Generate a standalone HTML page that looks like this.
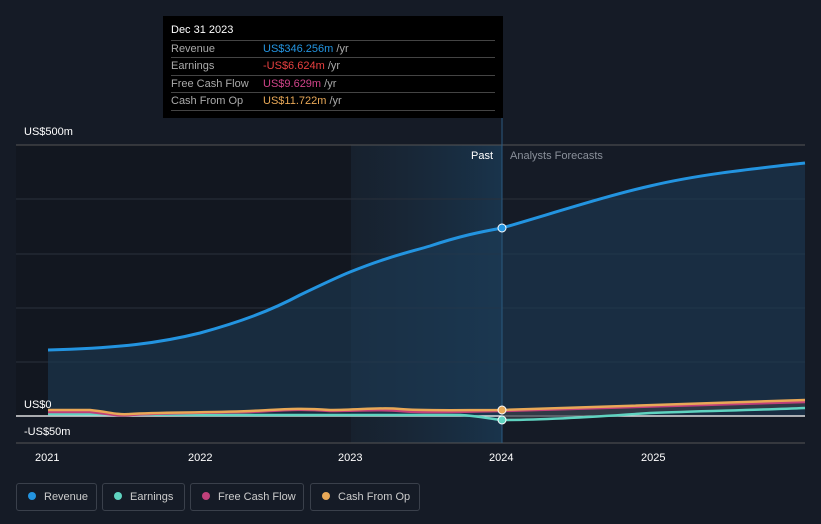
<!DOCTYPE html><html><head><style>
body{margin:0;width:821px;height:524px;background:#151b26;font-family:"Liberation Sans",sans-serif;overflow:hidden;position:relative}
.t{position:absolute;color:#fff;font-size:11px}
.tip{position:absolute;left:163px;top:16px;width:340px;height:102px;background:#000}
.row{position:absolute;left:8px;width:324px;border-top:1px solid #444;height:17px;font-size:11px;color:#aaa;line-height:17px}
.row b{font-weight:normal;position:absolute;left:92px}
.leg{position:absolute;top:483px;height:28px;border:1px solid #3a404b;border-radius:3px;color:#ccc;font-size:11px;line-height:26px;box-sizing:border-box;white-space:nowrap}
.leg i{display:inline-block;width:8px;height:8px;border-radius:50%;margin:0 8px 0 11px}
</style></head><body>
<svg width="821" height="524" style="position:absolute;left:0;top:0">
<defs><linearGradient id="h" x1="0" x2="1"><stop offset="0" stop-color="#1a2a3a" stop-opacity=".4"/><stop offset="1" stop-color="#1a3a55" stop-opacity=".8"/></linearGradient></defs>
<rect x="16" y="145" width="335" height="271" fill="#121720"/>
<rect x="351" y="145" width="151" height="298" fill="url(#h)"/>
<g stroke="#2a303b" stroke-width="1"><line x1="16" y1="145" x2="805" y2="145" stroke="#555"/><line x1="16" y1="199" x2="805" y2="199"/><line x1="16" y1="254" x2="805" y2="254"/><line x1="16" y1="308" x2="805" y2="308"/><line x1="16" y1="362" x2="805" y2="362"/><line x1="16" y1="443" x2="805" y2="443" stroke="#555"/></g>
<path d="M48,350 C120,348 160,343 200,333 C240,322 270,311 300,295 C325,283 340,276 350,272 C390,256 410,252 430,246 C460,236 480,232 502,228 C560,211 610,195 650,186 C700,174 760,168 805,163 L805,416 L48,416Z" fill="#1d3a55" fill-opacity=".6"/>
<path d="M48,350 C120,348 160,343 200,333 C240,322 270,311 300,295 C325,283 340,276 350,272 C390,256 410,252 430,246 C460,236 480,232 502,228 C560,211 610,195 650,186 C700,174 760,168 805,163" fill="none" stroke="#2394e0" stroke-width="3"/>
<line x1="16" y1="416" x2="805" y2="416" stroke="#ddd" stroke-width="1.5"/>
<path d="M502,419 C600,416 700,410 805,408 L805,402 L502,411Z" fill="#3a3f48" fill-opacity=".7"/>
<path d="M48,414 L200,415 L460,415 C480,416 490,419 502,420 C540,420 580,418 650,413 C700,411 760,410 805,408" fill="none" stroke="#5fd3c0" stroke-width="2.5"/>
<path d="M48,412 L90,412 C110,414 115,416 130,415 C160,413 200,413 250,412 C290,410 300,409 330,411 C360,411 380,409 400,411 C420,413 460,412 502,411 L805,402" fill="none" stroke="#c0407a" stroke-width="2.5"/>
<path d="M48,410 L90,410 C110,412 115,415 130,414 C160,412 200,413 250,411 C290,409 300,408 330,410 C360,410 380,407 400,409 C420,411 460,410 502,410 L805,400" fill="none" stroke="#e8a857" stroke-width="2.5"/>
<line x1="502" y1="118" x2="502" y2="443" stroke="#2a5a80"/>
<circle cx="502" cy="228" r="4" fill="#2394e0" stroke="#fff" stroke-width="1"/>
<circle cx="502" cy="420" r="4" fill="#5fd3c0" stroke="#fff" stroke-width="1"/>
<circle cx="502" cy="410" r="4" fill="#e8a857" stroke="#fff" stroke-width="1"/>
</svg>
<div class="t" style="left:24px;top:126px">US$500m</div>
<div class="t" style="left:24px;top:399px">US$0</div>
<div class="t" style="left:24px;top:426px">-US$50m</div>
<div class="t" style="left:471px;top:150px">Past</div>
<div class="t" style="left:510px;top:150px;color:#8a909a">Analysts Forecasts</div>
<div class="t" style="left:35px;top:452px">2021</div>
<div class="t" style="left:188px;top:452px">2022</div>
<div class="t" style="left:338px;top:452px">2023</div>
<div class="t" style="left:489px;top:452px">2024</div>
<div class="t" style="left:641px;top:452px">2025</div>
<div class="tip">
<div style="position:absolute;left:8px;top:8px;color:#fff;font-size:11px">Dec 31 2023</div>
<div class="row" style="top:24px">Revenue<b><span style="color:#2394e0">US$346.256m</span> /yr</b></div>
<div class="row" style="top:41px">Earnings<b><span style="color:#e84040">-US$6.624m</span> /yr</b></div>
<div class="row" style="top:59px">Free Cash Flow<b><span style="color:#d0448a">US$9.629m</span> /yr</b></div>
<div class="row" style="top:76px;border-bottom:1px solid #444">Cash From Op<b><span style="color:#e8a857">US$11.722m</span> /yr</b></div>
</div>
<div class="leg" style="left:16px;width:81px"><i style="background:#2394e0"></i>Revenue</div>
<div class="leg" style="left:102px;width:83px"><i style="background:#5fd3c0"></i>Earnings</div>
<div class="leg" style="left:190px;width:114px"><i style="background:#c0407a"></i>Free Cash Flow</div>
<div class="leg" style="left:310px;width:110px"><i style="background:#e8a857"></i>Cash From Op</div>
</body></html>
